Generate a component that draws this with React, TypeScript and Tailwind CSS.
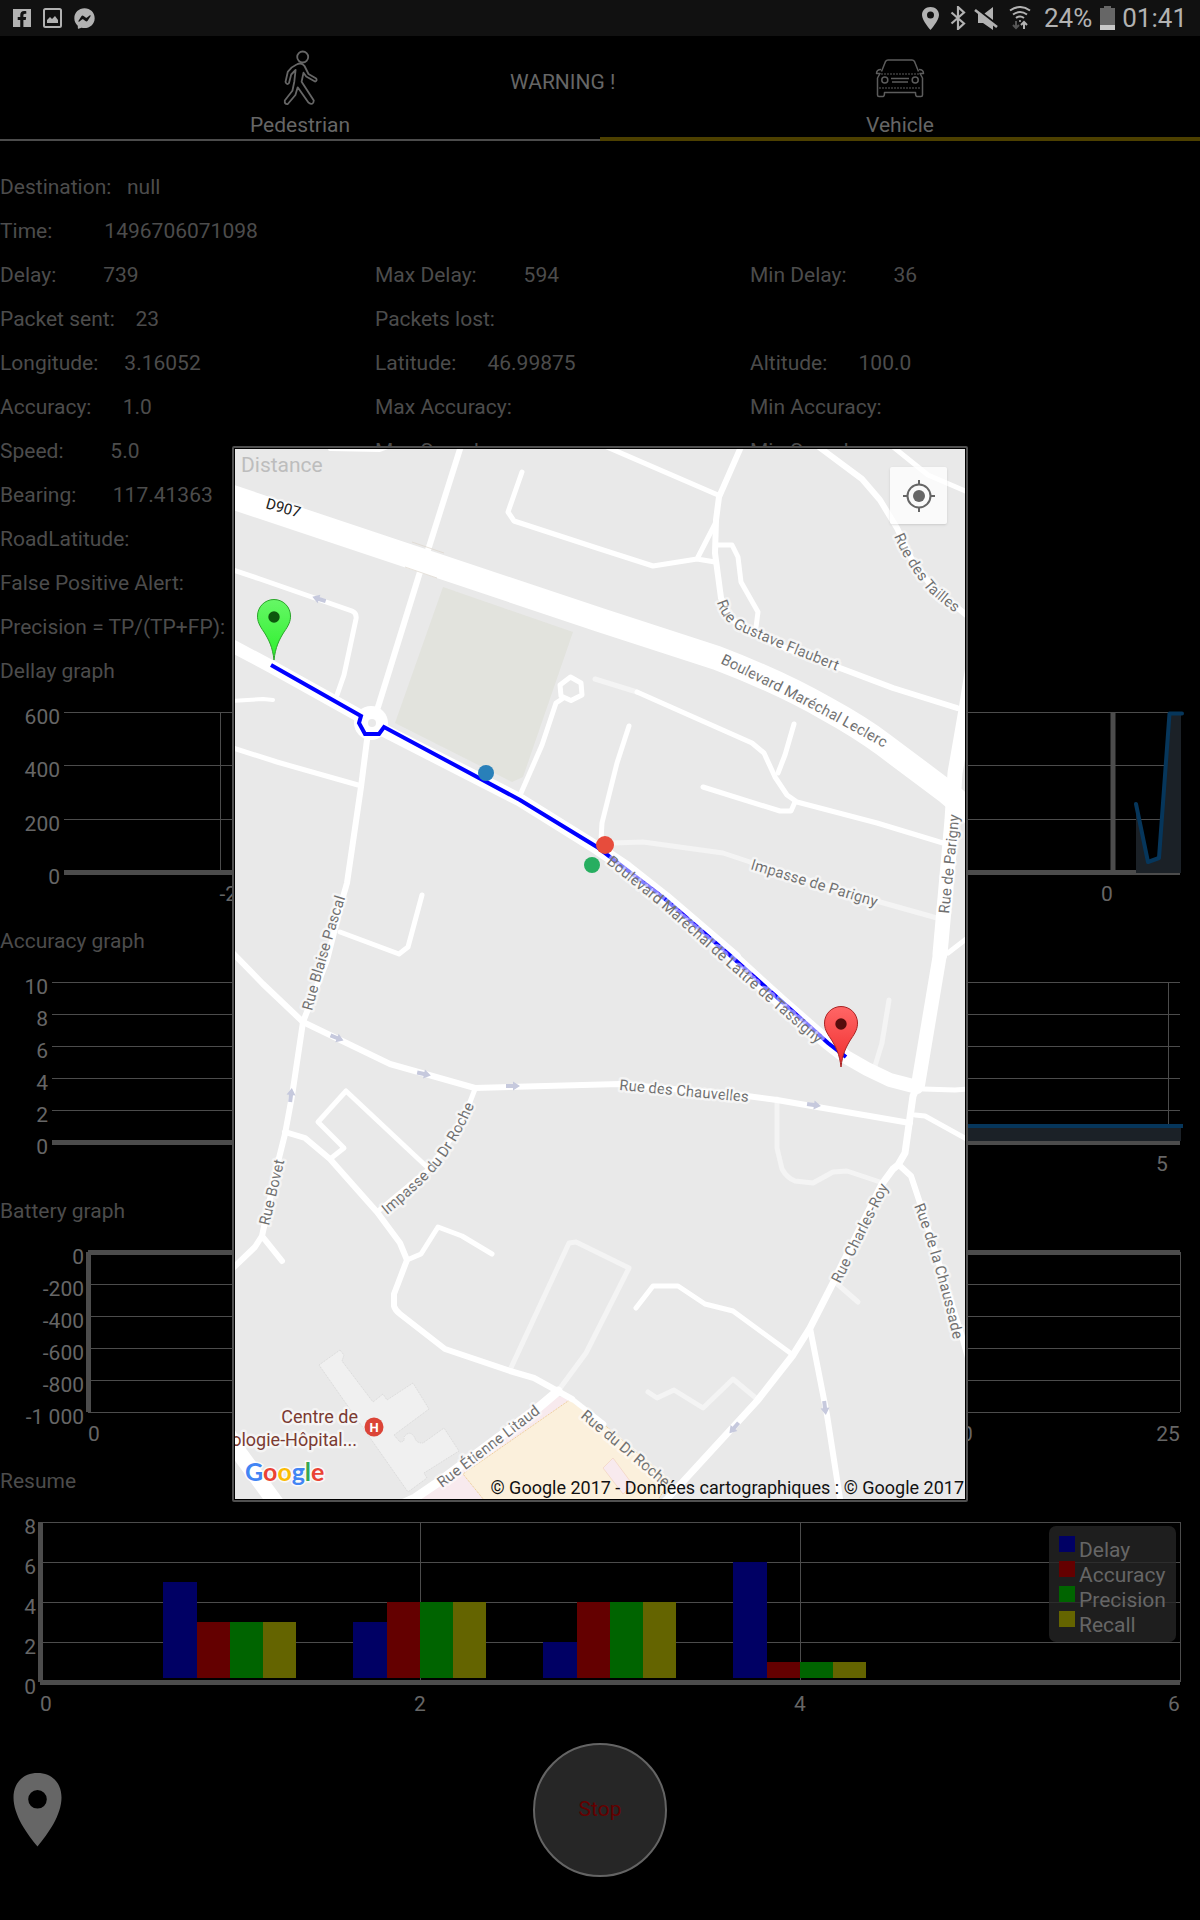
import { FaFacebookF, FaFacebookMessenger } from "react-icons/fa";

const COLUMNS: string[][] = [
  ["Destination:   null"],
  ["Time:          1496706071098"],
  ["Delay:         739", "Max Delay:         594", "Min Delay:         36"],
  ["Packet sent:    23", "Packets lost:"],
  ["Longitude:     3.16052", "Latitude:      46.99875", "Altitude:      100.0"],
  ["Accuracy:      1.0", "Max Accuracy:", "Min Accuracy:"],
  ["Speed:         5.0", "Max Speed:", "Min Speed:"],
  ["Bearing:       117.41363"],
  ["RoadLatitude:"],
  ["False Positive Alert:"],
  ["Precision = TP/(TP+FP):"],
];

function StatusBar() {
  return (
    <header className="flex h-9 items-center justify-between bg-[#111111] pl-[13px] pr-[13px] text-[#b2b2b2]">
      <div className="flex items-center gap-[12px]">
        <span className="flex size-[18px] items-end justify-end bg-[#b2b2b2] pr-px">
          <FaFacebookF className="size-[16px] text-[#111111]" />
        </span>
        <svg className="h-5 w-[19px]" viewBox="0 0 19 20" fill="none">
          <rect x="1" y="1" width="17" height="18" rx="1.5" stroke="#b2b2b2" strokeWidth="2" />
          <path d="M4 15v-3l3-3 2 2 3-3 3 4v3z" fill="#b2b2b2" />
        </svg>
        <FaFacebookMessenger className="size-[21px]" />
      </div>
      <div className="flex items-center">
        <svg className="h-6 w-[78px]" viewBox="0 0 78 24" fill="none">
          <path
            d="M9.500 1C4.500 1 1 4.500 1 9c0 5.500 8.500 15 8.500 15S18 14.500 18 9c0-4.500-3.500-8-8.500-8zm0 4.500a3.500 3.500 0 1 1 0 7 3.500 3.500 0 0 1 0-7z"
            fill="#b2b2b2"
            fillRule="evenodd"
          />
          <path d="M30.500 6.500l12.500 11-6 5.500v-22l6 5.500-12.500 11" stroke="#b2b2b2" strokeWidth="2.200" />
          <path d="M63.500 7.500L72 1V14zM57 7V17H62L72 24V18z" fill="#b2b2b2" />
          <path d="M54 4L76 21" stroke="#b2b2b2" strokeWidth="2.600" />
        </svg>
        <svg className="ml-[9px] h-6 w-6" viewBox="0 0 24 24" fill="none" stroke="#b2b2b2" strokeWidth="2">
          <path d="M2 4.500q10-7 20 0M5 8.500q7-5 14 0M8 12q4-3 8 0" />
          <circle cx="12" cy="15" r="1" fill="#b2b2b2" stroke="none" />
          <path d="M16 23v-6m-3 2l3-3 3 3" />
          <path d="M8 15v6m-3-2l3 3 3-3" stroke="#555555" />
        </svg>
        <span className="ml-3 text-[26px] leading-9">24%</span>
        <svg className="ml-2 h-6 w-[15px]" viewBox="0 0 15 24">
          <path d="M4 0h7v2h4v17H0V2h4z" fill="#666666" />
          <path d="M0 19h15v5H0z" fill="#c8c8c8" />
        </svg>
        <span className="ml-[7px] text-[26px] leading-9">01:41</span>
      </div>
    </header>
  );
}

function Tabs() {
  return (
    <nav className="relative grid h-[105px] grid-cols-2 text-[21px] leading-6 text-[#666666]">
      <button className="flex flex-col items-center justify-end border-b-2 border-[#4c4c4c] pb-[2px]">
        <svg className="mb-[7px] h-[56px] w-[35px]" viewBox="-1 -1 35 56" fill="none" stroke="#666666" strokeWidth="1.800" strokeLinejoin="round">
          <circle cx="18.700" cy="6" r="5.500" />
          <path d="M12.600 13.500Q7 16 3.800 20.700L1.500 31q1.500 3.500 3.500 1L7.200 23.500 11.600 19 10.300 30.700 8.400 39.700 0.800 49.500q-.5 4 3 3.500L11.400 44 13.700 36.300 24.400 51.500q5 3.500 5.400-2L17.600 30.700 19.500 21.700 22.200 25.500 31 30.500q2.500-.5 1.200-3L24.500 23 20.500 15q-3-4-7.900-1.500z" />
        </svg>
        Pedestrian
      </button>
      <button className="flex flex-col items-center justify-end border-b-4 border-[#4d4000]">
        <svg className="mb-[15px] h-[40px] w-[50px]" viewBox="-1 -1 50 40" fill="none" stroke="#5c5c5c" strokeWidth="1.500" strokeLinejoin="round">
          <path d="M5.500 12.500L9.500 2.500Q10.500 1 12 1H36q1.500 0 2.500 1.500L42.500 12.500" />
          <path d="M5 10.500q-4.500 0-4.500 4H4L1.500 19V36q0 1.500 1.500 1.500H7q1.500 0 1.500-4H39.500q0 4 1.500 4h4q1.500 0 1.500-1.500V19L44 14.500h3.500q0-4-4.500-4" />
          <circle cx="8.800" cy="21" r="3" />
          <circle cx="39.200" cy="21" r="3" />
          <path d="M15 19.500H33M16 23H32" />
          <path d="M5 15H43M3 29H45" strokeDasharray="2 1" strokeWidth="1" />
        </svg>
        Vehicle
      </button>
      <span className="absolute left-[510px] top-[34px]">WARNING !</span>
    </nav>
  );
}

type ChartProps = {
  title: string;
  left: number;
  ySteps: string[];
  xLines: number[];
  xLabels: [number, string][];
  thickY?: number;
  thickX?: number;
  children?: React.ReactNode;
};

const TOP = 19;
const HEIGHT = 160;

function Chart({ title, left, ySteps, xLines, xLabels, thickY, thickX, children }: ChartProps) {
  const step = HEIGHT / (ySteps.length - 1);
  return (
    <section>
      <h2 className="text-[21px] leading-11 text-[#4c4c4c]">{title}</h2>
      <svg className="block h-auto w-full" viewBox="0 0 1200 226" fontSize="21" fill="#666666">
        {ySteps.map((label, i) => (
          <g key={label}>
            <path d={`M${left} ${TOP + 0.5 + Math.round(i * step)}H1180`} stroke="#4c4c4c" strokeWidth={i === thickY ? 5 : 1} />
            <text x={left - 4} y={TOP + 12 + Math.round(i * step)} textAnchor="end">
              {label}
            </text>
          </g>
        ))}
        {xLines.map((x) => (
          <path key={x} d={`M${x} ${TOP}V${TOP + HEIGHT}`} stroke="#4c4c4c" strokeWidth={x === thickX ? 5 : 1} />
        ))}
        {xLabels.map(([x, label]) => (
          <text key={label} x={x} y="208" textAnchor="middle">
            {label}
          </text>
        ))}
        {children}
      </svg>
    </section>
  );
}

const SERIES = [
  { name: "Delay", color: "#000064", values: [5, 3, 2, 6] },
  { name: "Accuracy", color: "#640000", values: [3, 4, 4, 1] },
  { name: "Precision", color: "#006400", values: [3, 4, 4, 1] },
  { name: "Recall", color: "#646400", values: [3, 4, 4, 1] },
];
const BAR_EDGES = [0, 34, 67, 100, 133];
const GROUPS = [163, 353, 543, 733];

function ResumeChart() {
  return (
    <Chart
      title="Resume"
      left={40}
      ySteps={["8", "6", "4", "2", "0"]}
      xLines={[40.5, 420.5, 800.5, 1180.5]}
      xLabels={[[46, "0"], [420, "2"], [800, "4"], [1174, "6"]]}
      thickY={4}
      thickX={40.5}
    >
      {SERIES.map((s, i) =>
        s.values.map((v, g) => (
          <rect key={`${s.name}${g}`} x={GROUPS[g] + BAR_EDGES[i]} y={179 - v * 20} width={BAR_EDGES[i + 1] - BAR_EDGES[i]} height={v * 20 - 4} fill={s.color} />
        )),
      )}
      <rect x="1049" y="23" width="127" height="116" rx="7" fill="#262626" fillOpacity="0.8" />
      {SERIES.map((s, i) => (
        <g key={s.name}>
          <rect x="1059" y={33 + i * 25} width="16" height="16" fill={s.color} />
          <text x="1079" y={54 + i * 25}>
            {s.name}
          </text>
        </g>
      ))}
    </Chart>
  );
}

const WHITE_ROADS: [number, string][] = [
  [24, "M220 493L235 498 600 620 717 658Q780 682 827 709 860 727 884 745L948 793 980 820"],
  [15, "M974 660L966 710 955 773 952 820 940 954"],
  [14, "M940 954L918 1085"],
  [7, "M918 1085L913 1096 905 1153 898 1165 893 1169 882 1184 833 1283 810 1328 793 1355 757 1401 667 1499 660 1506"],
  [13, "M225 642L272 667 360 716M383 730L520 800 597 848 627 868 665 898 735 958"],
  [14, "M735 960L780 1001 828 1043 846 1057 867 1069 890 1080 917 1087"],
  [6, "M378 707L420 572 429 547 460 449 462 440"],
  [6, "M367 740L361 787 347 883 343 897 327 960 303 1022 292 1096 285 1134 278 1162 262 1236 255 1247 230 1271M262 1236L282 1261"],
  [5, "M230 569L260 579 352 611Q357 613 356 619L344 675 337 695"],
  [4, "M230 701L263 699 273 700"],
  [5, "M230 747L277 762 358 785"],
  [4, "M330 449L380 450 390 446"],
  [5, "M522 472L508 512 514 521 600 549 653 566 697 559 715 562M697 559L716 522"],
  [6, "M744 440L719 497 716 520 715 553 721 598 730 618 747 630 787 649 840 668 893 688 957 708"],
  [5, "M600 444L718 495"],
  [5, "M718 545H732L738 557 741 582 758 612 756 627"],
  [6, "M815 444L862 479 880 500 897 528 912 560 933 588 970 618"],
  [5, "M892 446L928 475 970 493"],
  [5, "M637 692L752 743 764 753 775 777 787 795 797 802 877 823 943 843"],
  [5, "M794 724L785 755 778 773M703 787L780 811H791L795 802"],
  [5, "M629 726L617 763 602 823 601 840"],
  [5, "M570.500 677L581 683 582 695 571 700.500 561 696 560 685ZM562 699L556 703 542 745 521 793"],
  [5, "M948 953L970 936M340 932L399 954 408 947 422 895"],
  [6, "M228 948L263 984 303 1022 390 1064 475 1088 620 1084 747 1096 777 1100 910 1123"],
  [5, "M915 1115L925 1116 970 1141M923 1089L955 1090 970 1089"],
  [6, "M810 1328L827 1415 841 1505M899 1165L911 1176 920 1203 963 1340 970 1365"],
  [5, "M636 1308L653 1286H678L705 1304 733 1311 793 1355"],
  [6, "M285 1132L305 1138 330 1159 377 1212 400 1243 407 1260 394 1294V1306Q395 1310 400 1314L445 1349 510 1371 534 1378 572 1399"],
  [5, "M572 1399L604 1424"],
  [5, "M330 1159L344 1148 318 1122 346 1091 427 1167"],
  [5, "M475 1089L470 1102 450 1140 428 1170 377 1212"],
  [5, "M407 1260L421 1254 438 1227 462 1236 492 1254"],
  [9, "M558 1391L538 1408 437 1483 415 1498 400 1505"],
  [16, "M224 1428L240 1454 278 1506"],
];

const LIGHT_ROADS = [
  "M595 679L637 692",
  "M613 843L643 842 723 853 750 862 880 902 937 918",
  "M777 1099V1148L782 1169Q787 1178 795 1181L813 1183 833 1172 847 1171 880 1182",
  "M889 1000L882 1043 875 1066",
  "M835 1282L858 1302",
  "M648 1392L657 1398 674 1390 703 1408 733 1379 757 1399",
  "M510 1370L569 1243 576 1242 629 1268 586 1353 558 1391",
];

const ARROWS: [number, number, number][] = [
  [319, 599, 198],
  [337, 1038, 22],
  [424, 1074, 12],
  [513, 1086, 0],
  [291, 1095, -83],
  [814, 1105, 8],
  [825, 1408, 83],
  [734, 1428, 131],
];

const STREETS: [string, string, string][] = [
  ["pascal", "Rue Blaise Pascal", "M312 1011Q324 965 347 892L350 870"],
  ["bovet", "Rue Bovet", "M269 1226L287 1150"],
  ["litaud", "Rue Étienne Litaud", "M442 1488L560 1398"],
  ["impasse-roche", "Impasse du Dr Roche", "M387 1215Q417 1190 435 1171 455 1148 475 1104L482 1085"],
  ["flaubert", "Rue Gustave Flaubert", "M717 602Q722 621 740 631L787 651 860 680"],
  ["leclerc", "Boulevard Maréchal Leclerc", "M720 663L783 694 833 720 910 762"],
  ["tailles", "Rue des Tailles", "M894 536Q905 563 927 590 940 602 975 628"],
  ["impasse-parigny", "Impasse de Parigny", "M750 869L900 914"],
  ["parigny", "Rue de Parigny", "M949 914L962 790"],
  ["lattre", "Boulevard Maréchal de Lattre de Tassigny", "M606 863L663 909 728 967 776 1009 850 1072"],
  ["chauvelles", "Rue des Chauvelles", "M619 1090L780 1105"],
  ["charles", "Rue Charles-Roy", "M840 1284L895 1174"],
  ["chaussade", "Rue de la Chaussade", "M914 1206Q934 1257 953 1338L960 1370"],
  ["dr-roche", "Rue du Dr Roche", "M580 1417L676 1497"],
];

function Pin({ x, y, top, base, edge, dot, id }: { x: number; y: number; top: string; base: string; edge: string; dot: string; id: string }) {
  return (
    <g transform={`translate(${x} ${y})`}>
      <linearGradient id={id} x1="0" y1="0" x2="0" y2="1">
        <stop offset="0" stopColor={top} />
        <stop offset="1" stopColor={base} />
      </linearGradient>
      <path d="M0 0C-1.500-13-5-20-10-28-15-35-16.500-39-16.500-44a16.500 16.500 0 0 1 33 0C16.500-39 15-35 10-28 5-20 1.500-13 0 0z" fill={`url(#${id})`} stroke={edge} />
      <circle cy="-43" r="5.700" fill={dot} />
    </g>
  );
}

function StreetMap() {
  return (
    <svg className="block h-auto w-full bg-[#e9e9e9]" viewBox="235 449 730 1050" fill="none" role="img" aria-label="Carte">
      <path d="M443 587L573 632 523 777 512 782 395 723z" fill="#e2e3dd" />
      <path d="M548 1394L571 1399 463 1474 483 1499H413L437 1480z" fill="#f8eaee" />
      <path d="M571 1399L600 1421 670 1481 658 1500H484L463 1474z" fill="#fbf0dc" stroke="#efc98c" strokeDasharray="1 1" />
      <path d="M613 1458L603 1468 623 1494 633 1485z" fill="#f8eaee" stroke="#efc9b0" strokeWidth="0.500" />
      <path
        d="M340 1350L344 1355 342 1361 373 1402 383 1394 387 1400 413 1383 429 1409 394 1435 400 1442 Q405 1442 404 1437 410 1429 415 1438 416 1443 423 1443L444 1428 459 1451 424 1473 427 1478 408 1492 319 1365z"
        fill="#f0f0f0"
        stroke="#d8d8d8"
        strokeDasharray="1 1"
      />
      <g strokeLinecap="round" strokeLinejoin="round">
        {LIGHT_ROADS.map((d) => (
          <path key={d} d={d} stroke="#f4f4f4" strokeWidth="5" />
        ))}
        {WHITE_ROADS.map(([w, d]) => (
          <path key={d} d={d} stroke="#ffffff" strokeWidth={w} />
        ))}
      </g>
      <circle cx="371" cy="723" r="17" fill="#ffffff" />
      <circle cx="372" cy="723" r="4" fill="#e9e9e9" />
      <path d="M412 542L444 553M405 567L437 578" stroke="#ddd6cc" strokeWidth="0.700" />
      {ARROWS.map(([x, y, a]) => (
        <path key={`${x}-${y}`} d="M-7-2H0V-4.500L7 0 0 4.500V2H-7z" fill="#c6c9dd" transform={`translate(${x} ${y}) rotate(${a})`} />
      ))}
      <path
        d="M271 665L361 716 359 723 365 734H379L384 727 520 800 597 847 627 870 665 899 733 958 780 1000 828 1043 846 1057"
        stroke="#0000ff"
        strokeWidth="4"
      />
      <g fontSize="15" fill="#707070" stroke="#ffffff" strokeOpacity="0.5" strokeWidth="5" strokeLinejoin="round" style={{ paintOrder: "stroke" }}>
        {STREETS.map(([id, name, d]) => (
          <g key={id}>
            <path id={id} d={d} fill="none" stroke="none" />
            <text>
              <textPath href={`#${id}`}>{name}</textPath>
            </text>
          </g>
        ))}
        <text fill="#222222" transform="translate(265 508) rotate(16)">
          D907
        </text>
        <g fontSize="18" fill="#7b3b32" textAnchor="end">
          <text x="358" y="1423">
            Centre de
          </text>
          <text x="357" y="1446">
            ologie-Hôpital...
          </text>
        </g>
      </g>
      <circle cx="374" cy="1427" r="9.500" fill="#db4437" />
      <text x="374" y="1432" fontSize="13" fontWeight="700" fill="#ffffff" textAnchor="middle">
        H
      </text>
      <Pin id="start" x={274} y={660} top="#66f766" base="#2cf02c" edge="#2aa52a" dot="#0d560d" />
      <Pin id="end" x={841} y={1067} top="#ff6666" base="#f02c2c" edge="#a82424" dot="#560d0d" />
      <circle cx="486" cy="773" r="8" fill="#2980b9" />
      <circle cx="592" cy="865" r="8" fill="#27ae60" />
      <circle cx="605" cy="845" r="9" fill="#e74c3c" />
      <text x="245" y="1481" fontSize="25" fontWeight="700" stroke="#ffffff" strokeWidth="3" strokeOpacity="0.8" style={{ paintOrder: "stroke", fontFamily: "Lato, sans-serif" }}>
        <tspan fill="#4285f4">G</tspan>
        <tspan fill="#ea4335">o</tspan>
        <tspan fill="#fbbc05">o</tspan>
        <tspan fill="#4285f4">g</tspan>
        <tspan fill="#34a853">l</tspan>
        <tspan fill="#ea4335">e</tspan>
      </text>
      <text x="964" y="1494" fontSize="18" fill="#111111" textAnchor="end">
        © Google 2017 - Données cartographiques : © Google 2017
      </text>
    </svg>
  );
}

function MapDialog() {
  return (
    <div className="absolute inset-x-0 top-[446px] flex justify-center">
      <div role="dialog" aria-label="Distance" className="w-[736px] max-w-full rounded-xs border-2 border-[#505050] bg-black p-px">
        <div className="relative">
          <StreetMap />
          <span className="absolute left-[6px] top-1 text-[21px] leading-6 text-[#bdbdbd]">Distance</span>
          <button aria-label="Ma position" className="absolute right-[18px] top-[18px] flex size-[57px] items-center justify-center rounded-xs bg-white/75 shadow">
            <svg className="size-8" viewBox="0 0 32 32" fill="none" stroke="#666666" strokeWidth="2">
              <circle cx="16" cy="16" r="11.500" />
              <circle cx="16" cy="16" r="6" fill="#666666" stroke="none" />
              <path d="M16 0V5M16 27V32M0 16H5M27 16H32" />
            </svg>
          </button>
        </div>
      </div>
    </div>
  );
}

export default function App() {
  return (
    <div className="relative min-h-screen overflow-hidden bg-black font-['Roboto',sans-serif]">
      <StatusBar />
      <Tabs />
      <main className="pt-6">
        {COLUMNS.map((row) => (
          <div key={row[0]} className="grid grid-cols-[375fr_375fr_450fr] text-[21px] leading-11 whitespace-pre text-[#4c4c4c]">
            {row.map((cell) => (
              <span key={cell}>{cell}</span>
            ))}
          </div>
        ))}
        <Chart
          title="Dellay graph"
          left={64}
          ySteps={["600", "400", "200", "0"]}
          xLines={[220.5, 1113]}
          xLabels={[[240, "-200"], [1107, "0"]]}
          thickY={3}
          thickX={1113}
        >
          <path d="M1136 111L1148 169 1159 165 1169 21H1181V180H1136z" fill="#1b2127" />
          <path d="M1136 111L1148 169 1159 165 1169.500 20.500H1182" fill="none" stroke="#06365b" strokeWidth="4" strokeLinecap="round" strokeLinejoin="round" />
        </Chart>
        <Chart
          title="Accuracy graph"
          left={52}
          ySteps={["10", "8", "6", "4", "2", "0"]}
          xLines={[1168.5]}
          xLabels={[[1162, "5"]]}
          thickY={5}
        >
          <path d="M400 163H1181V178H400z" fill="#1b2127" />
          <path d="M400 163H1183" stroke="#06365b" strokeWidth="4" />
        </Chart>
        <Chart
          title="Battery graph"
          left={88}
          ySteps={["0", "-200", "-400", "-600", "-800", "-1 000"]}
          xLines={[88.5, 307.5, 525.5, 743.5, 961.5, 1180.5]}
          xLabels={[[94, "0"], [307, "5"], [525, "10"], [743, "15"], [961, "20"], [1168, "25"]]}
          thickY={0}
          thickX={88.5}
        />
        <ResumeChart />
      </main>
      <footer className="grid grid-cols-3 items-center px-[13px] pt-[14px]">
        <button aria-label="Position" className="w-[49px]">
          <svg className="block h-[74px] w-[49px]" viewBox="0 0 49 74">
            <path d="M24.500 0C10 0 .5 10 .5 24.500.5 42 14 61 24.500 73.500 35 61 48.500 42 48.500 24.500 48.500 10 39 0 24.500 0zm0 17a9.300 9.300 0 1 1 0 18.600 9.300 9.300 0 0 1 0-18.600z" fill="#666666" fillRule="evenodd" />
          </svg>
        </button>
        <button className="size-[134px] justify-self-center rounded-full border-2 border-[#646464] bg-[#262626] text-[21px] text-[#640000]">Stop</button>
      </footer>
      <MapDialog />
    </div>
  );
}
